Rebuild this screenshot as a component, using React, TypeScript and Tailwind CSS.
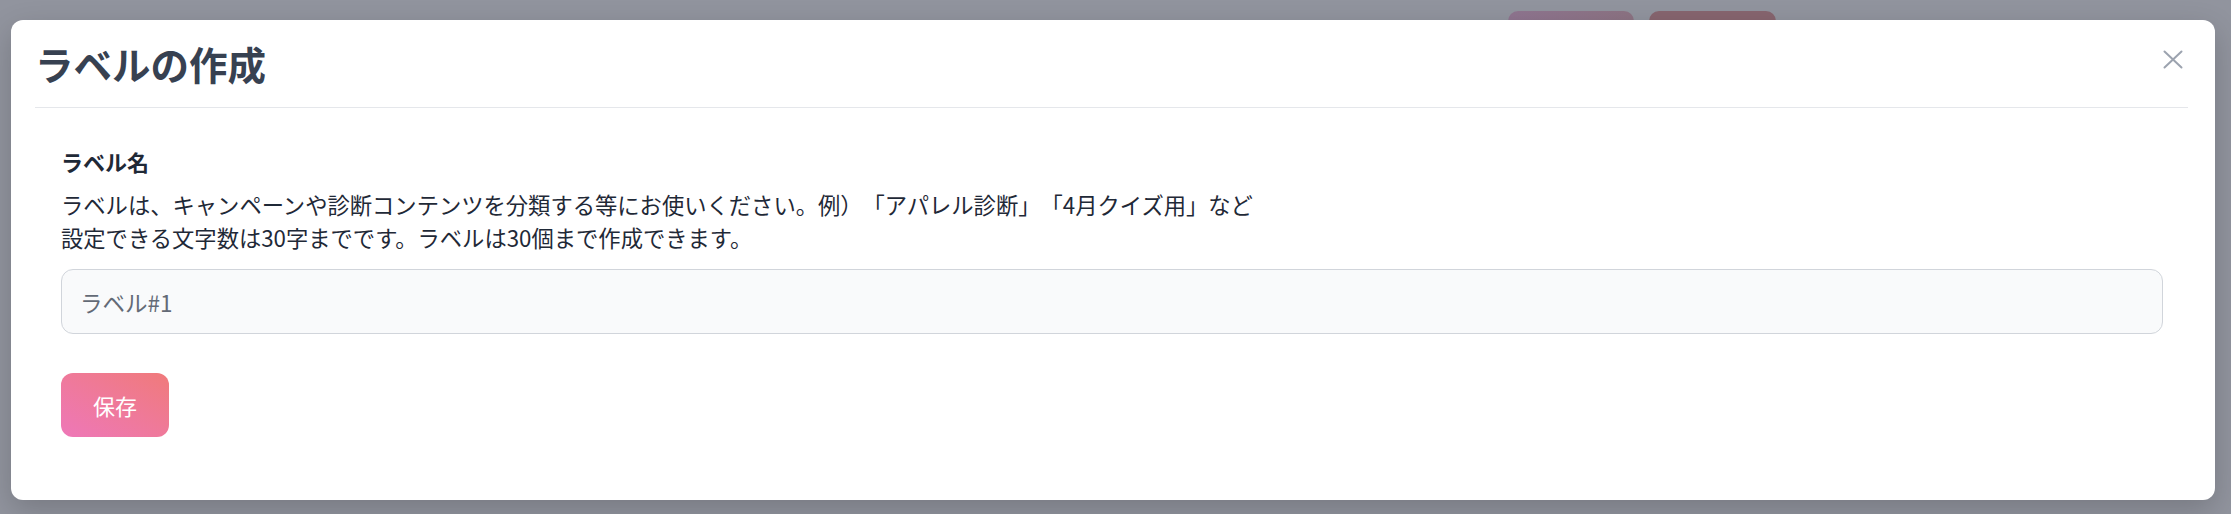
export default function App() {
  return (
    <div className="relative h-[514px] w-full overflow-hidden bg-[#91949e] font-['Noto_Sans_CJK_JP','Noto_Sans',sans-serif] [text-spacing-trim:space-all]">
      {/* Page behind the overlay */}
      <div className="flex justify-end gap-[15px] pt-[11px] pr-[455px]">
        <div className="h-[40px] w-[126px] rounded-[10px] bg-linear-to-r from-[#8f7590] to-[#8c7383]" />
        <div className="h-[40px] w-[127px] rounded-[10px] bg-[#87656f]" />
      </div>

      {/* Modal */}
      <div className="absolute left-[11px] top-[20px] w-[2204px] rounded-xl bg-white shadow-[0_10px_30px_rgba(0,0,0,0.18)]">
        {/* Header */}
        <div className="ml-[24px] mr-[27px] flex h-[88px] items-center justify-between border-b border-[#e5e7eb]">
          <h1 className="text-[38.5px] font-bold leading-none text-[#374151]">ラベルの作成</h1>
          <button className="mb-[8px] mr-[5px] text-[#9ca3af]">
            <svg width="20" height="19" viewBox="0 0 20 19" fill="none" stroke="currentColor" strokeWidth="2" strokeLinecap="round">
              <path d="M1.5 1.5 18.5 17.5" />
              <path d="M18.5 1.5 1.5 17.5" />
            </svg>
          </button>
        </div>

        {/* Body */}
        <div className="pb-[63px] pl-[50px] pr-[52px] pt-[38px]">
          <p className="text-[22px] font-bold leading-[30px] text-[#1f2937]">ラベル名</p>
          <p className="mt-[12px] text-[22.3px] leading-[33px] text-[#1f2937]">
            ラベルは、キャンペーンや診断コンテンツを分類する等にお使いください。例）「アパレル診断」「4月クイズ用」など
            <br />
            設定できる文字数は30字までです。ラベルは30個まで作成できます。
          </p>
          <input
            type="text"
            placeholder="ラベル#1"
            className="mt-[15px] block h-[65px] w-full rounded-xl border border-[#d1d5db] bg-[#f9fafb] px-[18px] text-[22.5px] text-[#1f2937] placeholder:text-[#636a76] focus:outline-none"
          />
          <button className="mt-[39px] block h-[64px] w-[108px] rounded-xl bg-linear-to-tr from-[#ee77b8] to-[#f07a7a] text-[22px] text-white">
            保存
          </button>
        </div>
      </div>
    </div>
  );
}
